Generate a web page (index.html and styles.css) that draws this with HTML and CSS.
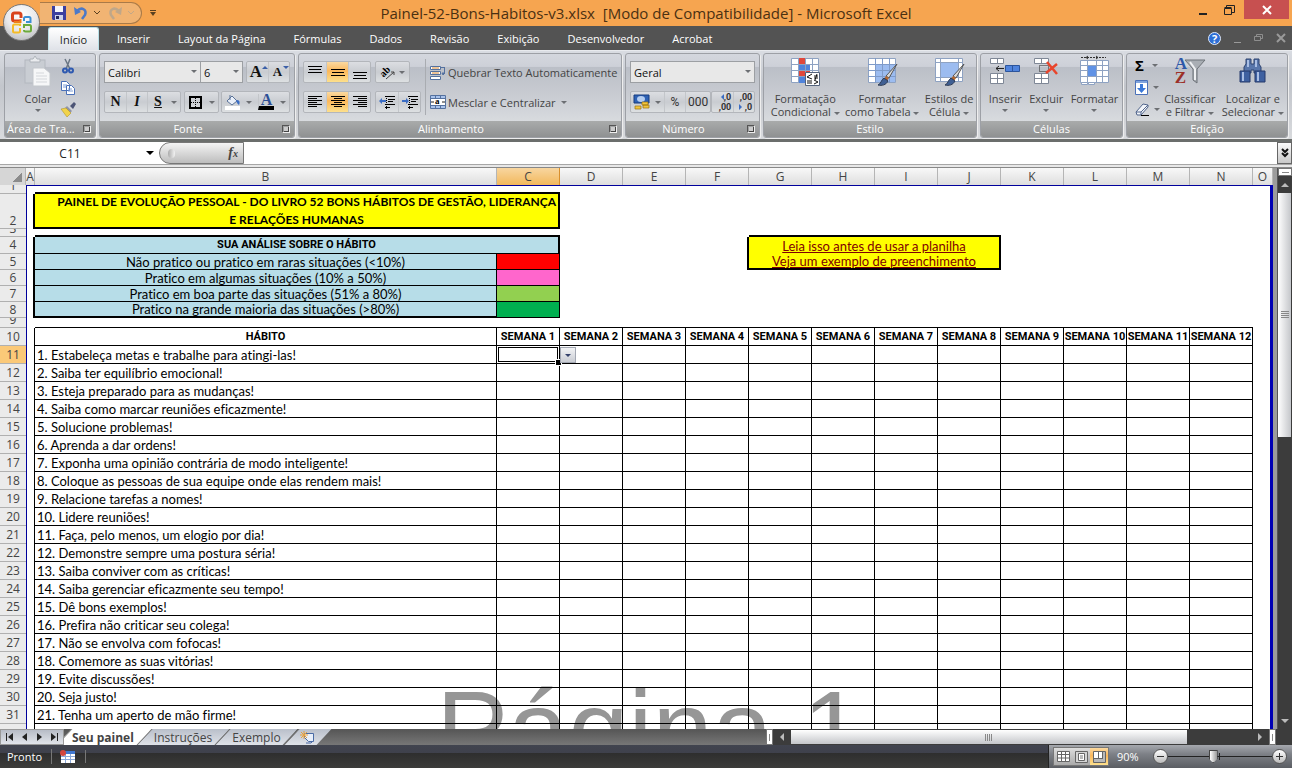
FILE: index.html
```
<!DOCTYPE html>
<html lang="pt-BR">
<head>
    <meta charset="UTF-8">
    <meta name="viewport" content="width=device-width, initial-scale=1.0">
    <link rel="stylesheet" href="styles.css">
    <title>Painel-52-Bons-Habitos-v3.xlsx - Microsoft Excel</title>
</head>
<body>
    <div class="window">
        <button class="office-button" aria-label="Botão Office">
            <svg width="24" height="24" viewBox="0 0 24 24" fill="none">
                <path d="M11 10H4.500Q2.500 10 2.500 8V4Q2.500 2 4.500 2H9Q11 2 11 4V7" stroke="#d9431c" stroke-width="3"/>
                <path d="M4 11h6.500V8" stroke="#ee7d1b" stroke-width="2"/>
                <path d="M14 10V7.500Q14 6 15.500 6H19Q20.500 6 20.500 7.500V11H16" stroke="#3b8fd4" stroke-width="2"/>
                <path d="M10 17V20Q10 21.500 8.500 21.500H4.500Q3 21.500 3 20V15Q3 13.500 4.500 13.500H10V15" stroke="#f4bb27" stroke-width="2"/>
                <path d="M14 17v-3h5.500Q21 14 21 15.500V19Q21 20.500 19.500 20.500H15.500Q14 20.500 14 19" stroke="#6cab3c" stroke-width="2"/>
            </svg>
        </button>

        <div class="titlebar">
            <div class="quick-access">
                <button class="plain" aria-label="Salvar">
                    <svg width="14" height="14" viewBox="0 0 14 14"><path d="M0 0h14v14H1L0 13z" fill="#3c3f9f"/><path d="M3 0h8v6H3z" fill="#f4f5fb"/><path d="M3 9h8v5H3z" fill="#cdd2ea"/><path d="M4 10h3v3H4z" fill="#23265f"/></svg>
                </button>
                <button class="plain" aria-label="Desfazer">
                    <svg width="14" height="14" viewBox="0 0 14 14"><path d="M3 5c5-5 10-1 8 4l-3 4" fill="none" stroke="#4c79c7" stroke-width="2.500"/><path d="M0 1l1 8 6-3z" fill="#4c79c7"/></svg>
                </button>
                <svg class="chevron" width="6" height="4" viewBox="0 0 6 4"><path d="M0 0l3 3 3-3" fill="none" stroke="#5a4020"/></svg>
                <button class="plain faded" aria-label="Refazer">
                    <svg width="14" height="14" viewBox="0 0 14 14"><path d="M11 5C6 0 1 4 3 9l3 4" fill="none" stroke="#b5a58f" stroke-width="2.500"/><path d="M14 1l-1 8-6-3z" fill="#b5a58f"/></svg>
                </button>
                <svg class="chevron faded" width="6" height="4" viewBox="0 0 6 4"><path d="M0 0l3 3 3-3" fill="none" stroke="#b5a58f"/></svg>
            </div>
            <button class="plain customize" aria-label="Personalizar">
                <svg width="6" height="6" viewBox="0 0 6 6"><path d="M0 0h6v1H0zM0 2h6L3 6z" fill="#5a4020"/></svg>
            </button>
            <h1 class="title">Painel-52-Bons-Habitos-v3.xlsx&nbsp; [Modo de Compatibilidade] - Microsoft Excel</h1>
            <div class="window-buttons">
                <button class="plain" aria-label="Minimizar"><svg width="8" height="10" viewBox="0 0 8 10"><path d="M0 8h8v2H0z" fill="#222"/></svg></button>
                <button class="plain" aria-label="Restaurar"><svg width="11" height="10" viewBox="0 0 11 10"><path d="M.5 3.500h7v6h-7zM.5 2.500h7" fill="none" stroke="#222"/><path d="M2.500 2V.5h8v7H8" fill="none" stroke="#222"/></svg></button>
                <button class="close" aria-label="Fechar"><svg width="8" height="8" viewBox="0 0 8 8"><path d="M0 0l8 8M8 0L0 8" stroke="#fff" stroke-width="2"/></svg></button>
            </div>
        </div>

        <div class="menu">
            <button class="tab active">Início</button>
            <button class="tab">Inserir</button>
            <button class="tab">Layout da Página</button>
            <button class="tab">Fórmulas</button>
            <button class="tab">Dados</button>
            <button class="tab">Revisão</button>
            <button class="tab">Exibição</button>
            <button class="tab">Desenvolvedor</button>
            <button class="tab">Acrobat</button>
            <div class="menu-right">
                <button class="help" aria-label="Ajuda">?</button>
                <button class="plain" aria-label="Minimizar pasta"><svg width="7" height="9" viewBox="0 0 7 9"><path d="M0 8h7v1H0z" fill="#9a9a9a"/></svg></button>
                <button class="plain" aria-label="Restaurar pasta"><svg width="10" height="8" viewBox="0 0 10 8"><path d="M.5 2.500h6v4h-6zM2.500 2.500v-2h6v4h-2" fill="none" stroke="#8e8e8e"/></svg></button>
                <button class="plain" aria-label="Fechar pasta"><svg width="8" height="8" viewBox="0 0 8 8"><path d="M0 0l8 8M8 0L0 8" stroke="#9a9a9a" stroke-width="2"/></svg></button>
            </div>
        </div>

        <div class="ribbon">
            <section class="group group-clipboard">
                <div class="group-body">
                    <button class="big">
                        <svg width="32" height="32" viewBox="0 0 32 32"><rect x="3" y="4" width="20" height="23" fill="#c9cdd3" stroke="#b3b8bf"/><path d="M8 6V3h3l2-3 2 3h3v3z" fill="#e9ebee" stroke="#aeb3ba"/><path d="M11 12h11l6 5v13H11z" fill="#f6f7f8" stroke="#c3c7cc"/><path d="M14 17h8M14 20h11M14 23h11M14 26h11" stroke="#d4d7db"/></svg>
                        <span>Colar</span><i class="arrow"></i>
                    </button>
                    <div class="stack clipboard-stack">
                        <button class="plain" aria-label="Recortar"><svg width="14" height="15" viewBox="0 0 14 15"><path d="M4 0l5 10M9 0L5 10" stroke="#6a7684" stroke-width="1.500"/><circle cx="4" cy="11.500" r="2" fill="none" stroke="#2f5ab0" stroke-width="2"/><circle cx="10" cy="11.500" r="2" fill="none" stroke="#2f5ab0" stroke-width="2"/></svg></button>
                        <button class="plain" aria-label="Copiar"><svg width="14" height="14" viewBox="0 0 14 14"><path d="M.5.5h5l3 3v6h-8zM5.500 4.500h5l3 3v6h-8z" fill="#fff" stroke="#4a70b8"/><path d="M2 4h4M2 6h3M7 8h4M7 10h5" stroke="#7d9cd4"/></svg></button>
                        <button class="plain" aria-label="Pincel"><svg width="15" height="15" viewBox="0 0 15 15"><path d="M9 4l4-4 2 2-3 5z" fill="#4d5576"/><path d="M6 4l5 5-2 2-5-5z" fill="#8f94a8"/><path d="M0 7l5-1 5 5-4 4z" fill="#f1d34a" stroke="#a98b1b" stroke-width=".5"/></svg></button>
                    </div>
                </div>
                <h2 class="group-title">Área de Tra...<i class="launcher"></i></h2>
            </section>

            <section class="group group-font">
                <div class="group-body rows">
                    <div class="row">
                        <div class="combo combo-font"><select aria-label="Fonte"><option>Calibri</option></select></div>
                        <div class="combo combo-size"><select aria-label="Tamanho"><option>6</option></select></div>
                        <div class="button-set font-resize">
                            <button class="serif grow" aria-label="Aumentar fonte">A<i class="mark up"></i></button>
                            <button class="serif shrink" aria-label="Diminuir fonte">A<i class="mark down"></i></button>
                        </div>
                    </div>
                    <div class="row spread">
                        <div class="button-set">
                            <button class="serif">N</button>
                            <button class="serif italic">I</button>
                            <button class="serif underline">S</button>
                            <button class="drop" aria-label="Sublinhado"><i class="arrow"></i></button>
                        </div>
                        <div class="button-set">
                            <button aria-label="Bordas"><svg width="13" height="13" viewBox="0 0 13 13"><path d="M1 1h11v11H1z" fill="none" stroke="#000" stroke-width="2"/><path d="M6.500 2v9M2 6.500h9" stroke="#000" stroke-dasharray="1 1"/></svg></button>
                            <button class="drop" aria-label="Mais bordas"><i class="arrow"></i></button>
                        </div>
                        <div class="button-set">
                            <button aria-label="Preenchimento"><svg width="16" height="15" viewBox="0 0 16 15"><path d="M2 6l5-5 5 5-5 4z" fill="#eaf0fa" stroke="#5b7399"/><path d="M12 5c3 0 3 3 2 5-2-1-2-3-3-4z" fill="#3b6dc4"/><path d="M5 0v5" stroke="#5b7399"/><path d="M0 11h15v4H0z" fill="#fff"/></svg></button>
                            <button class="drop" aria-label="Mais preenchimentos"><i class="arrow"></i></button>
                            <button class="serif font-color" aria-label="Cor da fonte">A</button>
                            <button class="drop" aria-label="Mais cores"><i class="arrow"></i></button>
                        </div>
                    </div>
                </div>
                <h2 class="group-title">Fonte<i class="launcher"></i></h2>
            </section>

            <section class="group group-align">
                <div class="group-body">
                    <div class="stack align-stack">
                        <div class="row">
                            <div class="button-set">
                                <button class="wide" aria-label="Alinhar em cima"><svg width="14" height="14" viewBox="0 0 14 14"><path d="M0 1.500h14M1 4.500h12M0 7.500h14" stroke="#000"/></svg></button>
                                <button class="wide on" aria-label="Alinhar no meio"><svg width="14" height="14" viewBox="0 0 14 14"><path d="M0 4.500h14M1 7.500h12M0 10.500h14" stroke="#000"/></svg></button>
                                <button class="wide" aria-label="Alinhar embaixo"><svg width="14" height="14" viewBox="0 0 14 14"><path d="M0 7.500h14M1 10.500h12M0 13.500h14" stroke="#000"/></svg></button>
                            </div>
                            <div class="button-set">
                                <button class="orientation" aria-label="Orientação"><svg width="17" height="15" viewBox="0 0 17 15"><text x="0" y="10" transform="rotate(-45 5 7)" class="svg-ab">ab</text><path d="M6 14l8-7M14 7h-3M14 7v3" stroke="#444" fill="none"/></svg><i class="arrow"></i></button>
                            </div>
                        </div>
                        <div class="row">
                            <div class="button-set">
                                <button class="wide" aria-label="Alinhar à esquerda"><svg width="14" height="12" viewBox="0 0 14 12"><path d="M0 .5h14M0 2.500h9M0 4.500h14M0 6.500h9M0 8.500h14M0 10.500h9" stroke="#000"/></svg></button>
                                <button class="wide on" aria-label="Centralizar"><svg width="14" height="12" viewBox="0 0 14 12"><path d="M0 .5h14M3 2.500h8M0 4.500h14M3 6.500h8M0 8.500h14M3 10.500h8" stroke="#000"/></svg></button>
                                <button class="wide" aria-label="Alinhar à direita"><svg width="14" height="12" viewBox="0 0 14 12"><path d="M0 .5h14M5 2.500h9M0 4.500h14M5 6.500h9M0 8.500h14M5 10.500h9" stroke="#000"/></svg></button>
                            </div>
                            <div class="button-set">
                                <button class="wide" aria-label="Diminuir recuo"><svg width="16" height="13" viewBox="0 0 16 13"><path d="M6 .5h10M9 3.500h7M9 5.500h5M6 8.500h10M6 11.500h5" stroke="#000"/><path d="M7.500 0v13" stroke="#000" stroke-dasharray="1 1"/><path d="M0 5l3-3v2h4v2H3v2z" fill="#3b6dc4"/></svg></button>
                                <button class="wide" aria-label="Aumentar recuo"><svg width="16" height="13" viewBox="0 0 16 13"><path d="M6 .5h10M9 3.500h7M9 5.500h5M6 8.500h10M6 11.500h5" stroke="#000"/><path d="M7.500 0v13" stroke="#000" stroke-dasharray="1 1"/><path d="M7 5L4 2v2H0v2h4v2z" fill="#3b6dc4"/></svg></button>
                            </div>
                        </div>
                    </div>
                    <div class="stack text-stack">
                        <button class="labelled"><svg width="16" height="15" viewBox="0 0 16 15"><path d="M.5 1.500h10v3H.5zM.5 6.500h10v3H.5zM.5 11.500h10v3H.5z" fill="#fff" stroke="#54719f"/><path d="M2 3h7M2 8h7" stroke="#d9862f"/><path d="M11 2.500h4M14.500 3v5M12 8h3l-2 2z" stroke="#54719f" fill="#54719f"/></svg><span>Quebrar Texto Automaticamente</span></button>
                        <button class="labelled"><svg width="16" height="14" viewBox="0 0 16 14"><path d="M.5.5h15v13H.5z" fill="#fff" stroke="#54719f"/><path d="M1 1h14v2H1zM1 11h14v2H1z" fill="#a9c3ec"/><path d="M0 3.500h16M0 10.500h16M5.500.5v3M10.500.5v3M5.500 10.500v3M10.500 10.500v3" stroke="#54719f"/><text x="5" y="9" class="svg-a">a</text><path d="M1 7h3M12 7h3" stroke="#222"/></svg><span>Mesclar e Centralizar</span><i class="arrow"></i></button>
                    </div>
                </div>
                <h2 class="group-title">Alinhamento<i class="launcher"></i></h2>
            </section>

            <section class="group group-number">
                <div class="group-body rows">
                    <div class="row">
                        <div class="combo combo-number"><select aria-label="Formato de número"><option>Geral</option></select></div>
                    </div>
                    <div class="row spread">
                        <div class="button-set">
                            <button aria-label="Formato de contabilização"><svg width="17" height="16" viewBox="0 0 17 16"><path d="M1 1h15v8H1z" fill="#2f62b5" stroke="#173d80"/><ellipse cx="8" cy="5" rx="4" ry="3" fill="#b4cdf1"/><path d="M9 8h6v3H9zM10 11h6v3h-6zM2 12h6v3H2z" fill="#f2c53d" stroke="#9b7413" stroke-width=".7"/></svg></button>
                            <button class="drop" aria-label="Mais moedas"><i class="arrow"></i></button>
                            <button class="percent">%</button>
                            <button class="thousand">000</button>
                        </div>
                        <div class="button-set">
                            <button class="decimal" aria-label="Aumentar casas"><i class="left-arrow"></i>,0<br>,00</button>
                            <button class="decimal" aria-label="Diminuir casas">,00<br><i class="right-arrow"></i>,0</button>
                        </div>
                    </div>
                </div>
                <h2 class="group-title">Número<i class="launcher"></i></h2>
            </section>

            <section class="group group-style">
                <div class="group-body">
                    <button class="big">
                        <svg width="32" height="32" viewBox="0 0 32 32"><path d="M2.500 2.500h27v24h-27z" fill="#fff" stroke="#8ea2c2"/><path d="M9 2h7v6H9zM9 14h12v6H9z" fill="#e0483c"/><path d="M9 8h12v6H9zM9 20h7v7H9z" fill="#4f83dc"/><path d="M2 8.500h28M2 14.500h28M2 20.500h28M9.500 2v25M16.500 2v25M23.500 2v25" stroke="#8ea2c2"/><path d="M16.500 16.500h14v13h-14z" fill="#fff" stroke="#53627c"/><path d="M23 18l-5 3 5 2M18 25h5M18 27h5M25 20h4M25 22h4M28 18l-2 6M25 24l4 2-4 2" fill="none" stroke="#111"/></svg>
                        <span>Formatação<br>Condicional <i class="arrow"></i></span>
                    </button>
                    <button class="big">
                        <svg width="32" height="32" viewBox="0 0 32 32"><path d="M2.500 2.500h27v24h-27z" fill="#fff" stroke="#8ea2c2"/><path d="M9 8h20v18H9z" fill="#9cbcf0"/><path d="M2 8.500h28M2 14.500h28M2 20.500h28M9.500 2v25M16.500 2v25M23.500 2v25" stroke="#7f9bc9"/><path d="M31 8L20 20l3 2z" fill="#d9d9d9" stroke="#555"/><path d="M20 20l3 2-2 3-3-2z" fill="#b5672f"/><path d="M18 22l4 3c-2 4-6 5-10 4 3-1 3-5 6-7z" fill="#3f5f93" stroke="#2d3b55"/></svg>
                        <span>Formatar<br>como Tabela <i class="arrow"></i></span>
                    </button>
                    <button class="big">
                        <svg width="32" height="32" viewBox="0 0 32 32"><path d="M2.500 2.500h27v23h-27z" fill="#fff" stroke="#8ea2c2"/><path d="M7.500 6.500h18v15h-18z" fill="#9cbcf0" stroke="#6f90c8"/><path d="M2 6.500h27M2 21.500h27M7.500 2v24M25.500 2v24" stroke="#8ea2c2"/><path d="M31 8L20 20l3 2z" fill="#d9d9d9" stroke="#555"/><path d="M20 20l3 2-2 3-3-2z" fill="#b5672f"/><path d="M18 22l4 3c-2 4-6 5-10 4 3-1 3-5 6-7z" fill="#3f5f93" stroke="#2d3b55"/></svg>
                        <span>Estilos de<br>Célula <i class="arrow"></i></span>
                    </button>
                </div>
                <h2 class="group-title">Estilo</h2>
            </section>

            <section class="group group-cells">
                <div class="group-body">
                    <button class="big">
                        <svg width="32" height="32" viewBox="0 0 32 32"><path d="M1.500 2.500h13v5h-13zM1.500 17.500h13v10h-13zM1.500 22.500h13M8.500 2v6M8.500 17v11" fill="#fff" stroke="#7e8796"/><path d="M16.500 9.500h14v6h-14z" fill="#4f83dc" stroke="#2c559c"/><path d="M23.500 9v7" stroke="#2c559c"/><path d="M7 12.500h8M10 10l-3 2.500 3 2.500" stroke="#222" fill="none"/></svg>
                        <span>Inserir</span><i class="arrow"></i>
                    </button>
                    <button class="big">
                        <svg width="32" height="32" viewBox="0 0 32 32"><path d="M4.500 2.500h14v5h-14zM4.500 17.500h14v10h-14zM4.500 22.500h14M11.500 2v6M11.500 17v11" fill="#fff" stroke="#7e8796"/><path d="M9.500 9.500h9v6h-9z" fill="none" stroke="#222" stroke-dasharray="1 1"/><path d="M17 6l10 12M27 8l-11 9" stroke="#e8452c" stroke-width="2.500"/></svg>
                        <span>Excluir</span><i class="arrow"></i>
                    </button>
                    <button class="big">
                        <svg width="32" height="32" viewBox="0 0 32 32"><path d="M2.500 4.500h28v22h-28z" fill="#fff" stroke="#8ea2c2"/><path d="M2 9.500h28M2 14.500h28M2 20.500h28M9.500 4v22M18.500 4v22M24.500 4v22" stroke="#8ea2c2"/><path d="M10 10h8v10h-8z" fill="#5f92e6"/><path d="M3.500 26.500h6v2h-6zM10.500 26.500h6v2h-6z" fill="#fff" stroke="#8ea2c2"/><path d="M3 1.500h25" stroke="#333" stroke-dasharray="2 1"/><path d="M10 0l-2 1.500L10 3M18 0l2 1.500L18 3" stroke="#333" fill="none"/></svg>
                        <span>Formatar</span><i class="arrow"></i>
                    </button>
                </div>
                <h2 class="group-title">Células</h2>
            </section>

            <section class="group group-edit">
                <div class="group-body">
                    <div class="stack edit-stack">
                        <button class="labelled sigma" aria-label="Soma">Σ<i class="arrow"></i></button>
                        <button class="labelled" aria-label="Preencher"><svg width="13" height="15" viewBox="0 0 13 15"><path d="M.5.5h12v14H.5z" fill="#fff" stroke="#4a70b8"/><path d="M1 1h11v2H1z" fill="#7fa3dd"/><path d="M5 4h3v4h3l-4.500 5L2 8h3z" fill="#3b78d8"/></svg><i class="arrow"></i></button>
                        <button class="labelled" aria-label="Limpar"><svg width="14" height="13" viewBox="0 0 14 13"><path d="M1 9l7-8 5 1v2l-7 8H2z" fill="#f2f5fa" stroke="#51658c"/><path d="M1 9h5l7-7M6 9v3" fill="none" stroke="#51658c"/><path d="M6 12.500h8" stroke="#000"/></svg><i class="arrow"></i></button>
                    </div>
                    <button class="big">
                        <span class="sort-icon"><b class="letter-a">A</b><b class="letter-z">Z</b><svg width="20" height="26" viewBox="0 0 20 26"><path d="M0 1h20l-8 9v14l-4-3V10z" fill="#a9aeb4" stroke="#6d7278"/><path d="M5 3l5 7v11" stroke="#eef0f2" stroke-width="2" fill="none"/></svg></span>
                        <span>Classificar<br>e Filtrar <i class="arrow"></i></span>
                    </button>
                    <button class="big">
                        <svg width="32" height="32" viewBox="0 0 32 32"><path d="M9 3h5v5h3V3h5v5l2 3v6h-7v-3h-3v3H7v-6l2-3z" fill="#5876ab" stroke="#2c4270"/><path d="M3 15h10v11H3zM18 15h10v11H18z" fill="#3e60a0" stroke="#24396a"/><path d="M6 16v9M21 16v9M11 4v7M19 4v7" stroke="#a9bee4" stroke-width="2"/></svg>
                        <span>Localizar e<br>Selecionar <i class="arrow"></i></span>
                    </button>
                </div>
                <h2 class="group-title">Edição</h2>
            </section>
        </div>

        <div class="formula-bar">
            <input class="name-box" type="text" value="C11" aria-label="Caixa de nome">
            <button class="plain name-drop" aria-label="Nomes"><i class="arrow black"></i></button>
            <div class="fx"><i class="knob"></i><button class="plain" aria-label="Inserir função"><em>f<sub>x</sub></em></button></div>
            <input class="formula" type="text" aria-label="Barra de fórmulas">
            <button class="expand" aria-label="Expandir"><svg width="8" height="10" viewBox="0 0 8 10"><path d="M1 1l3 3 3-3M1 5l3 3 3-3" fill="none" stroke="#111" stroke-width="2"/></svg></button>
        </div>

        <div class="workspace">
            <div class="sheet">
                <div class="watermark">Página 1</div>
                <table class="grid">
                    <colgroup>
                        <col class="col-heading"><col class="col-a"><col class="col-b">
                        <col class="col-week" span="12"><col class="col-o">
                    </colgroup>
                    <thead>
                        <tr id="letters"></tr>
                    </thead>
                    <tbody id="rows">
                        <tr class="h-1"><th><div>1</div></th><td class="a"></td><td colspan="2" class="thick-b"></td><td colspan="11"></td><td class="o"></td></tr>
                        <tr class="h-2"><th><div>2</div></th><td class="a thick-r"></td><td colspan="2" class="thick-b thick-r banner"><p>&nbsp;&nbsp;&nbsp;&nbsp;&nbsp;&nbsp;&nbsp;PAINEL DE EVOLUÇÃO PESSOAL - DO LIVRO 52 BONS HÁBITOS DE GESTÃO, LIDERANÇA<br>E RELAÇÕES HUMANAS</p></td><td colspan="11"></td><td class="o"></td></tr>
                        <tr class="h-3"><th><div>3</div></th><td class="a"></td><td colspan="2" class="thick-b"></td><td colspan="3"></td><td colspan="4" class="thick-b"></td><td colspan="4"></td><td class="o"></td></tr>
                        <tr class="h-4"><th><div>4</div></th><td class="a thick-r"></td><td colspan="2" class="scale strong thin-b thick-r">SUA ANÁLISE SOBRE O HÁBITO</td><td colspan="3" class="thick-r"></td><td colspan="4" class="link thick-r"><a href="#">Leia isso antes de usar a planilha</a></td><td colspan="4"></td><td class="o"></td></tr>
                        <tr class="h-5"><th><div>5</div></th><td class="a thick-r"></td><td class="scale thin-b thin-r">Não pratico ou pratico em raras situações (&lt;10%)</td><td class="thin-b thin-r red"></td><td colspan="3" class="thick-r"></td><td colspan="4" class="link thick-r thick-b"><a href="#">Veja um exemplo de preenchimento</a></td><td colspan="4"></td><td class="o"></td></tr>
                        <tr class="h-5"><th><div>6</div></th><td class="a thick-r"></td><td class="scale thin-b thin-r">Pratico em algumas situações (10% a 50%)</td><td class="thin-b thin-r pink"></td><td colspan="11"></td><td class="o"></td></tr>
                        <tr class="h-5"><th><div>7</div></th><td class="a thick-r"></td><td class="scale thin-b thin-r">Pratico em boa parte das situações (51% a 80%)</td><td class="thin-b thin-r lime"></td><td colspan="11"></td><td class="o"></td></tr>
                        <tr class="h-5"><th><div>8</div></th><td class="a thick-r"></td><td class="scale thick-b thin-r">Pratico na grande maioria das situações (&gt;80%)</td><td class="thin-b thin-r green"></td><td colspan="11"></td><td class="o"></td></tr>
                        <tr class="h-9"><th><div>9</div></th><td class="a"></td><td colspan="13" class="thin-b"></td><td class="o"></td></tr>
                    </tbody>
                </table>
            </div>
            <div class="v-scroll">
                <i class="split"></i>
                <button class="scroll-button" aria-label="Rolar para cima"><i class="tri up"></i></button>
                <div class="v-track"><i class="v-thumb"></i></div>
                <button class="scroll-button" aria-label="Rolar para baixo"><i class="tri down"></i></button>
            </div>
        </div>

        <div class="sheet-bar">
            <div class="sheet-nav">
                <button class="plain" aria-label="Primeira"><svg width="7" height="8" viewBox="0 0 7 8"><path d="M0 0h1v8H0zM7 0v8L2 4z" fill="#222"/></svg></button>
                <button class="plain" aria-label="Anterior"><svg width="5" height="8" viewBox="0 0 5 8"><path d="M5 0v8L0 4z" fill="#222"/></svg></button>
                <button class="plain" aria-label="Próxima"><svg width="5" height="8" viewBox="0 0 5 8"><path d="M0 0v8l5-4z" fill="#222"/></svg></button>
                <button class="plain" aria-label="Última"><svg width="7" height="8" viewBox="0 0 7 8"><path d="M6 0h1v8H6zM0 0v8l5-4z" fill="#222"/></svg></button>
            </div>
            <button class="sheet-tab current">Seu painel</button>
            <button class="sheet-tab">Instruções</button>
            <button class="sheet-tab">Exemplo</button>
            <button class="sheet-tab new" aria-label="Nova planilha"><svg width="15" height="13" viewBox="0 0 15 13"><path d="M4.500 2.500h9v8h-5l-4-4z" fill="#e8effa" stroke="#4a6ba5"/><path d="M6 12h5l3-3" fill="none" stroke="#4a6ba5"/><path d="M4 0v8M0 4h8M1 1l6 6M7 1L1 7" stroke="#e9a13b"/></svg></button>
            <div class="h-scroll">
                <i class="split"></i>
                <button class="scroll-button" aria-label="Rolar para a esquerda"><i class="tri left"></i></button>
                <div class="h-track"><i class="h-thumb"></i></div>
                <button class="scroll-button" aria-label="Rolar para a direita"><i class="tri right"></i></button>
                <i class="split"></i>
            </div>
        </div>

        <div class="status">
            <span class="ready">Pronto</span>
            <button class="plain macro" aria-label="Gravar macro"><svg width="15" height="13" viewBox="0 0 15 13"><path d="M1 1h14v12H1z" fill="#fff"/><path d="M5 1h10v3H5z" fill="#3f77d1"/><path d="M1 6.500h14M1 9.500h14M5.500 4v9M10.500 4v9" stroke="#8ba9da"/><circle cx="3" cy="3" r="3" fill="#d2453d"/></svg></button>
            <div class="status-right">
                <div class="views">
                    <button class="plain" aria-label="Normal"><svg width="13" height="11" viewBox="0 0 13 11"><path d="M.5.5h12v10H.5zM.5 3.500h12M.5 7h12M4.500.5v10M8.500.5v10" fill="#fff" stroke="#666"/></svg></button>
                    <button class="plain" aria-label="Layout da página"><svg width="13" height="12" viewBox="0 0 13 12"><path d="M.5.5h12v11H.5z" fill="#d5d5d5" stroke="#666"/><path d="M3.500 2.500h6v7h-6z" fill="#fff" stroke="#666"/><path d="M5 5h3M5 7h3" stroke="#777"/></svg></button>
                    <button class="plain on" aria-label="Quebra de página"><svg width="13" height="12" viewBox="0 0 13 12"><path d="M.5.5h12v11H.5z" fill="#b9b9b9" stroke="#666"/><path d="M1 1h4v6H1zM6 1h3v6H6z" fill="#fff"/><path d="M5.500 0v7M9.500 0v7M1 7.500h9" stroke="#666"/></svg></button>
                </div>
                <span class="percent-label">90%</span>
                <button class="zoom-button" aria-label="Menos zoom"><i class="minus"></i></button>
                <input class="zoom" type="range" min="0" max="100" value="43" aria-label="Zoom">
                <button class="zoom-button" aria-label="Mais zoom"><i class="minus"></i><i class="minus cross"></i></button>
            </div>
        </div>
    </div>
    <script src="script.js"></script>
</body>
</html>
```

FILE: styles.css
```
* {
    box-sizing: border-box;
}

body {
    margin: 0;
    font-family: "Open Sans", "Noto Sans", sans-serif;
    font-size: 11px;
    color: #333;
    background-color: #535353;
}

button {
    font: inherit;
    color: inherit;
    margin: 0;
    padding: 0;
    border: none;
    background: none;
    display: flex;
    align-items: center;
    justify-content: center;
    cursor: pointer;
}

svg {
    display: block;
    flex: none;
    overflow: visible;
}

.window {
    height: 100vh;
    display: flex;
    flex-direction: column;
    position: relative;
    overflow: hidden;
}

.window > div {
    flex: none;
}

/* title bar */

.office-button {
    position: absolute;
    left: 3px;
    top: 4px;
    z-index: 3;
    width: 37px;
    height: 37px;
    border-radius: 50%;
    border: 1px solid #777;
    background: radial-gradient(circle at 50% 30%, #fff 0, #e8e8ea 50%, #a9abb0 100%);
}

.titlebar {
    height: 26px;
    display: flex;
    align-items: center;
    position: relative;
    background-color: #f6a550;
}

.quick-access {
    height: 22px;
    margin-left: 40px;
    width: 102px;
    padding-left: 12px;
    display: flex;
    align-items: center;
    gap: 8px;
    border: 1px solid #a97a48;
    border-left: none;
    border-radius: 0 11px 11px 0;
    background-color: #f1b473;
}

.quick-access .chevron {
    margin-left: -2px;
}

.faded {
    opacity: 0.8;
}

.customize {
    margin-left: 8px;
}

.title {
    position: absolute;
    left: 160px;
    right: 160px;
    top: 0;
    margin: 0;
    line-height: 27px;
    font-size: 15px;
    font-weight: normal;
    text-align: center;
    color: #4a3012;
}

.window-buttons {
    margin-left: auto;
    align-self: flex-start;
    display: flex;
    align-items: center;
    gap: 17px;
}

.close {
    width: 45px;
    height: 19px;
    background-color: #c75050;
}

.window-buttons .close {
    margin-left: -8px;
    margin-right: 3px;
}

/* menu */

.menu {
    height: 24px;
    padding-left: 48px;
    display: flex;
    align-items: flex-end;
    background-color: #535353;
}

.tab {
    height: 24px;
    padding: 0 14px;
    color: #fff;
}

.tab.active {
    width: 51px;
    margin-right: 4px;
    height: 23px;
    color: #222;
    padding: 0;
    border: 1px solid #b9e0e8;
    border-bottom: none;
    border-radius: 3px 3px 0 0;
    background: linear-gradient(#fff, #dfe2e8);
}

.menu-right {
    margin-left: auto;
    align-self: center;
    padding-right: 7px;
    display: flex;
    align-items: center;
    gap: 13px;
}

.help {
    width: 13px;
    height: 13px;
    border-radius: 50%;
    border: 1px solid #dfe9fa;
    background-color: #2e6fd6;
    color: #fff;
    font-weight: bold;
    line-height: 11px;
}

/* ribbon */

.ribbon {
    height: 89px;
    padding: 2px 4px 1px;
    display: flex;
    gap: 3px;
    border-top: 1px solid #e8eaee;
    background: linear-gradient(#d9dce2, #c3c6cc 40%, #d8dadd);
}

.group {
    display: flex;
    flex-direction: column;
    overflow: hidden;
    border: 1px solid #9da0a6;
    border-radius: 3px;
    background: linear-gradient(#d4d7de 0, #cdd0d8 15%, #bbbfc7 16%, #c9ccd2 50%, #e1e4e6 100%);
    box-shadow: 1px 1px 0 #eee;
}

.group-clipboard {
    flex: 1 1 92px;
}

.group-font {
    flex: 1 1 196px;
}

.group-align {
    flex: 1 1 324px;
}

.group-number {
    flex: 1 1 135px;
}

.group-style {
    flex: 1 1 214px;
}

.group-cells {
    flex: 1 1 143px;
}

.group-edit {
    flex: 1 1 162px;
}

.group-body {
    flex: 1;
    display: flex;
    align-items: stretch;
    min-height: 0;
}

.group-style .group-body {
    padding-left: 4px;
}

.group-cells .group-body {
    padding-left: 4px;
}

.group-title {
    height: 16px;
    margin: 0;
    font-size: 11px;
    font-weight: normal;
    line-height: 15px;
    text-align: center;
    color: #fff;
    position: relative;
    background: linear-gradient(#a9abab, #8f9192);
}

.group-clipboard .group-title {
    text-align: left;
    padding-left: 2px;
}

.group-font .group-title,
.group-align .group-title,
.group-number .group-title {
    padding-right: 18px;
}

.launcher {
    position: absolute;
    right: 4px;
    top: 4px;
    width: 8px;
    height: 8px;
    border: 1px solid #555;
    border-right-color: #eee;
    border-bottom-color: #eee;
}

.launcher::after {
    content: "";
    position: absolute;
    right: 0;
    bottom: 0;
    width: 4px;
    height: 4px;
    border-right: 1px solid #444;
    border-bottom: 1px solid #444;
    background-color: #ccc;
}

.arrow {
    display: inline-block;
    flex: none;
    width: 0;
    height: 0;
    vertical-align: middle;
    border: 3px solid transparent;
    border-top-color: #6c6f73;
    border-bottom: none;
}

.arrow.black {
    border-width: 4px;
    border-bottom: none;
    border-top-color: #000;
}

.big {
    flex: 1 1 auto;
    flex-direction: column;
    justify-content: flex-start;
    padding-top: 2px;
    line-height: 13px;
    text-align: center;
    white-space: nowrap;
    color: #444;
}

.group-clipboard .big {
    padding-left: 10px;
}

.big svg {
    margin-bottom: 4px;
}

.big > .arrow {
    margin-top: 4px;
}

.stack {
    display: flex;
    flex-direction: column;
}

.clipboard-stack {
    width: 34px;
    gap: 7px;
    padding-top: 5px;
    align-items: flex-start;
}

.rows {
    flex-direction: column;
    gap: 8px;
    padding: 7px 4px 0;
}

.row {
    display: flex;
    height: 22px;
}

.spread {
    justify-content: space-between;
}

.combo {
    position: relative;
    display: flex;
}

.combo::after {
    content: "";
    position: absolute;
    right: 4px;
    top: 9px;
    border: 3px solid transparent;
    border-top-color: #6c6f73;
    border-bottom: none;
    pointer-events: none;
}

.combo select {
    width: 100%;
    padding: 0 3px;
    appearance: none;
    font: inherit;
    color: #111;
    border: 1px solid #9c9fa3;
    border-radius: 0;
    background-color: #e8e8e8;
}

.combo-font {
    width: 97px;
}

.combo-size {
    width: 43px;
    margin-left: -1px;
}

.combo-number {
    width: 128px;
}

.font-resize {
    margin-left: auto;
}

.button-set {
    display: flex;
    border: 1px solid #b3b6bb;
    border-radius: 2px;
    background: linear-gradient(#dcdee2, #c9ccd1 50%, #dde0e2);
}

.button-set button {
    min-width: 21px;
    position: relative;
}

.button-set button + button:not(.drop) {
    border-left: 1px solid #c3c6ca;
}

.button-set .drop {
    min-width: 12px;
}

.button-set .wide {
    min-width: 22px;
}

.button-set .on,
.views .on {
    background: linear-gradient(#fbd9a0, #fbb85c 45%, #fde08c);
}

.serif {
    font-family: "Liberation Serif", serif;
    font-size: 14px;
    font-weight: bold;
    color: #111;
}

.italic {
    font-style: italic;
}

.underline {
    text-decoration: underline;
}

.grow {
    font-size: 17px;
}

.shrink {
    font-size: 13px;
}

.grow,
.shrink {
    padding-right: 3px;
}

.mark {
    position: absolute;
    right: 0;
    top: 4px;
    border: 3px solid transparent;
}

.mark.up {
    border-top: none;
    border-bottom-color: #3b5fa8;
}

.mark.down {
    border-bottom: none;
    border-top-color: #3b5fa8;
}

.button-set .font-color {
    color: #2d4f96;
    font-size: 16px;
    line-height: 12px;
    align-self: center;
    height: 16px;
    border: none;
    border-bottom: 4px solid #000;
    min-width: 16px;
    margin: 0 3px;
}

.orientation {
    gap: 2px;
    padding: 0 4px;
}

.svg-ab {
    font: bold 10px "Liberation Serif", serif;
}

.svg-a {
    font: bold 9px "Liberation Serif", serif;
}

.align-stack {
    gap: 8px;
    padding: 7px 4px 0;
}

.align-stack .row {
    gap: 4px;
}

.text-stack {
    gap: 8px;
    margin-top: 5px;
    padding: 2px 0 0 4px;
    border-left: 1px solid #a9acb1;
    height: 56px;
    align-items: flex-start;
    white-space: nowrap;
}

.labelled {
    height: 22px;
    gap: 2px;
    color: #444;
}

.labelled .arrow {
    margin-left: 3px;
}

.percent,
.thousand {
    font-size: 12px;
}

.button-set .percent,
.button-set .thousand {
    border: none;
    padding: 0 2px;
}

.percent,
.thousand {
    font-family: Roboto, sans-serif;
}

.button-set .decimal {
    display: block;
    border: none;
    padding: 0 2px;
    font-family: Roboto, sans-serif;
    font-size: 9px;
    font-weight: bold;
    line-height: 10px;
    text-align: right;
}

.left-arrow,
.right-arrow {
    display: inline-block;
    border: 3px solid transparent;
}

.left-arrow {
    border-right-color: #3b6dc4;
}

.right-arrow {
    border-left-color: #3b6dc4;
}

.edit-stack {
    width: 34px;
    padding: 0 0 0 8px;
    align-items: flex-start;
}

.sigma {
    font-size: 15px;
    font-weight: bold;
    color: #000;
}

.sigma .arrow {
    margin-left: 6px;
}

.sort-icon {
    display: block;
    position: relative;
    width: 32px;
    height: 32px;
    margin-bottom: 4px;
    font-family: "Liberation Serif", serif;
    font-size: 17px;
}

.sort-icon b {
    position: absolute;
    left: 1px;
}

.letter-a {
    top: 1px;
    color: #2d57a8;
}

.letter-z {
    top: 15px;
    color: #9c3028;
}

.sort-icon svg {
    position: absolute;
    left: 11px;
    top: 3px;
}

/* formula bar */

.formula-bar {
    height: 28px;
    padding: 3px 0;
    display: flex;
    background: linear-gradient(#6b6e6c 0, #6b6e6c 3px, #fff 3px, #fff 25px, #666 25px, #e8e8e8 26px);
}

.formula-bar input {
    border: none;
    background: none;
    font: inherit;
    font-size: 12px;
    color: #222;
}

.name-box {
    width: 140px;
    padding: 0;
    text-align: center;
}

.name-drop {
    width: 19px;
}

.fx {
    width: 85px;
    display: flex;
    align-items: center;
    justify-content: space-between;
    padding: 0 5px 0 8px;
    border: 1px solid #777;
    border-radius: 11px 0 0 11px;
    background: linear-gradient(#f4f4f4, #bdbdbd);
}

.knob {
    width: 7px;
    height: 9px;
    border-radius: 50%;
    background: linear-gradient(90deg, #aaa, #f4f4f4);
}

.fx em {
    font-family: "Liberation Serif", serif;
    font-size: 14px;
    font-weight: bold;
    color: #444;
}

.fx sub {
    font-size: 10px;
    vertical-align: baseline;
}

.formula {
    flex: 1;
}

.expand {
    width: 15px;
    border: 1px solid #666;
    background: linear-gradient(#fafafa, #c8c8c8);
}

/* sheet */

.window .workspace {
    flex: 1;
    min-height: 0;
    display: flex;
    background-color: #9c9c9c;
    border-top: 1px solid #888;
}

.sheet {
    flex: 1;
    overflow: hidden;
    position: relative;
    margin-right: 4px;
    background-color: #fff;
}

.watermark {
    position: absolute;
    left: 26px;
    right: 0;
    top: 507px;
    text-align: center;
    font-family: "Liberation Sans", sans-serif;
    font-size: 108px;
    line-height: 108px;
    color: #969696;
}

.grid {
    position: relative;
    width: 100%;
    table-layout: fixed;
    border-collapse: separate;
    border-spacing: 0;
    font-family: Lato, sans-serif;
    font-size: 13px;
    font-variant-ligatures: none;
    line-height: 14px;
    color: #000;
}

.col-heading {
    width: 26px;
}

.col-a {
    width: 9px;
}

.col-week {
    width: 63px;
}

.col-o {
    width: 20px;
}

.grid td,
.grid th {
    padding: 0;
    white-space: nowrap;
}

.grid th {
    font-family: "Open Sans", sans-serif;
    font-size: 12px;
    font-weight: normal;
    color: #444;
}

.grid thead th {
    height: 17px;
    border-right: 1px solid #b5b5b5;
    background: linear-gradient(#f8f8f8, #dedede);
}

.grid thead .picked {
    border-right-color: #d98f2c;
    background: linear-gradient(#f8d6a0, #f2b85c);
}

.grid thead .corner {
    background: linear-gradient(135deg, transparent 50%, #8b8b8b 50%) no-repeat 13px 5px / 9px 9px, #d6d6d6;
}

.grid tbody th {
    border-bottom: 1px solid #b0b0b0;
    background-color: #ebebeb;
}

.grid tbody th.picked {
    background-color: #fbc978;
}

.grid tbody th div {
    display: flex;
    align-items: flex-end;
    justify-content: center;
    overflow: hidden;
}

.grid .a {
    border-left: 1px solid #00009c;
}

.grid .o {
    border-right: 3px solid #0000b4;
}

.h-1 td {
    height: 9px;
    border-top: 1px solid #00009c;
}

.h-1 div {
    height: 8px;
}

.h-2 td {
    height: 35px;
}

.h-2 div {
    height: 34px;
}

.h-3 td {
    height: 8px;
}

.h-3 div {
    height: 7px;
}

.h-4 td {
    height: 17px;
}

.h-5 td {
    height: 16px;
}

.h-9 td {
    height: 10px;
}

.h-9 div {
    height: 9px;
}

.h-10 td {
    height: 18px;
    border-bottom: 1px solid #000;
    border-right: 1px solid #000;
}

.h-10 .a {
    border-bottom: none;
}

.h-10 .o {
    border-bottom: none;
}

.grid .thick-b {
    border-bottom: 2px solid #000;
}

.grid .thick-r {
    border-right: 2px solid #000;
}

.grid .thin-b {
    border-bottom: 1px solid #000;
}

.grid .thin-r {
    border-right: 1px solid #000;
}

.banner {
    background-color: #ffff00;
}

.banner p {
    height: 32px;
    margin: 0;
    display: grid;
    align-content: center;
    font-size: 12px;
    line-height: 18px;
    font-weight: bold;
    text-align: center;
}

.scale {
    text-align: center;
    background-color: #b7dde8;
}

.strong,
.week {
    font-family: Roboto, sans-serif;
    font-size: 11px;
    font-weight: bold;
    text-align: center;
}

.red {
    background-color: #ff0000;
}

.pink {
    background-color: #ff66cc;
}

.lime {
    background-color: #92d050;
}

.green {
    background-color: #00b050;
}

.link {
    text-align: center;
    background-color: #ffff00;
}

.link a {
    color: #800000;
}

.grid .habit {
    padding-left: 2px;
}

.selected {
    position: relative;
}

.selected::before {
    content: "";
    position: absolute;
    inset: 1px;
    border: 1px solid #000;
}

.selected::after {
    content: "";
    position: absolute;
    right: -3px;
    bottom: -3px;
    width: 5px;
    height: 5px;
    border: 1px solid #fff;
    background-color: #000;
}

.cell-drop {
    position: absolute;
    left: 100%;
    top: 1px;
    margin-left: 1px;
    z-index: 1;
    width: 16px;
    height: 16px;
    border: 1px solid #a3a8b3;
    background: linear-gradient(#f2f3f5, #c9ccd3);
}

.cell-drop .arrow {
    border-top-color: #33406b;
}

/* scroll bars */

.split {
    flex: none;
    border: 1px solid #777;
    background: linear-gradient(#888, #888) no-repeat center / 7px 1px, #fff;
}

.scroll-button {
    flex: none;
    background-color: #3c3c3c;
}

.tri {
    border: 4px solid transparent;
}

.tri.up {
    border-top: none;
    border-bottom-color: #bbb;
}

.tri.down {
    border-bottom: none;
    border-top-color: #bbb;
}

.tri.left {
    border-left: none;
    border-right-color: #bbb;
}

.tri.right {
    border-right: none;
    border-left-color: #bbb;
}

.v-scroll {
    width: 15px;
    display: flex;
    flex-direction: column;
    border-left: 1px solid #555;
    background-color: #3c3c3c;
}

.v-scroll .split {
    height: 8px;
}

.v-scroll .scroll-button {
    height: 17px;
}

.v-track {
    flex: 1;
    padding-right: 1px;
}

.v-thumb {
    display: block;
    height: 47%;
    background: repeating-linear-gradient(#888 0 1px, transparent 1px 2px) no-repeat center / 8px 7px, linear-gradient(90deg, #fff, #c4c6ca);
}

.sheet-bar {
    height: 16px;
    display: flex;
    background: linear-gradient(#555, #777);
}

.sheet-nav {
    width: 64px;
    position: relative;
    z-index: 2;
    display: flex;
    align-items: center;
    justify-content: space-around;
    border: 1px solid #999;
    background: linear-gradient(#b7bcc6, #e1e4ea);
}

.sheet-tab {
    position: relative;
    z-index: 0;
    padding: 0 10px;
    font-size: 12px;
    line-height: 15px;
    color: #444;
}

.sheet-tab::before {
    content: "";
    position: absolute;
    inset: 0;
    z-index: -1;
    transform: skewX(-43deg);
    border-left: 1px solid #777;
    background: linear-gradient(#b9bfca, #dfe2e8);
}

.sheet-tab.current {
    z-index: 1;
    padding-left: 8px;
    font-weight: bold;
}

.sheet-tab.current::before {
    background: #fff;
}

.sheet-tab.new {
    width: 33px;
}

.h-scroll {
    width: 526px;
    margin-left: auto;
    padding-right: 16px;
    display: flex;
    background-color: #3c3c3c;
}

.h-scroll .split {
    width: 7px;
    background: linear-gradient(#888, #888) no-repeat center / 1px 7px, #fff;
}

.h-scroll .scroll-button {
    width: 18px;
}

.h-track {
    flex: 1;
    padding: 1px 0;
}

.h-thumb {
    display: block;
    width: 86%;
    height: 14px;
    background: repeating-linear-gradient(90deg, #888 0 1px, transparent 1px 2px) no-repeat center / 7px 7px, linear-gradient(#fff, #c4c6ca);
}

/* status bar */

.status {
    height: 23px;
    display: flex;
    align-items: center;
    color: #fff;
    background: linear-gradient(#41444f 0, #3f414c 8px, #2e2e2e 8px, #3c3c3a 100%);
}

.ready {
    padding: 0 9px 0 7px;
    border-right: 1px solid #777;
}

.macro {
    padding: 0 10px 0 8px;
    border-right: 1px solid #777;
}

.status-right {
    margin-left: auto;
    align-self: stretch;
    width: 244px;
    padding: 0 5px 0 4px;
    display: flex;
    align-items: center;
    border-left: 1px solid #222;
    background: linear-gradient(#a5a8ae, #7d8086 40%, #5b5e63);
}

.views {
    display: flex;
    border: 1px solid #777;
    background: linear-gradient(#ddd, #aaa);
}

.views button {
    width: 18px;
    height: 17px;
}

.percent-label {
    margin: 0 14px 0 8px;
}

.zoom-button {
    position: relative;
    width: 15px;
    height: 15px;
    border: 1px solid #555;
    border-radius: 50%;
    background: linear-gradient(#fff, #bbb);
}

.minus {
    position: absolute;
    left: 3px;
    top: 6px;
    width: 7px;
    height: 1px;
    background-color: #333;
}

.cross {
    transform: rotate(90deg);
}

.zoom {
    flex: 1;
    min-width: 0;
    height: 16px;
    margin: 0;
    appearance: none;
    background: linear-gradient(#222, #222) no-repeat center / 1px 7px, linear-gradient(#222, #222) no-repeat center / 100% 1px;
}

.zoom::-webkit-slider-thumb {
    appearance: none;
    width: 9px;
    height: 13px;
    background: linear-gradient(90deg, #fff, #999);
    border: 1px solid #444;
    clip-path: polygon(0 0, 100% 0, 100% 65%, 50% 100%, 0 65%);
}
```

FILE: script.js
```
const habits = [
    'Estabeleça metas e trabalhe para atingi-las!',
    'Saiba ter equilíbrio emocional!',
    'Esteja preparado para as mudanças!',
    'Saiba como marcar reuniões eficazmente!',
    'Solucione problemas!',
    'Aprenda a dar ordens!',
    'Exponha uma opinião contrária de modo inteligente!',
    'Coloque as pessoas de sua equipe onde elas rendem mais!',
    'Relacione tarefas a nomes!',
    'Lidere reuniões!',
    'Faça, pelo menos, um elogio por dia!',
    'Demonstre sempre uma postura séria!',
    'Saiba conviver com as críticas!',
    'Saiba gerenciar eficazmente seu tempo!',
    'Dê bons exemplos!',
    'Prefira não criticar seu colega!',
    'Não se envolva com fofocas!',
    'Comemore as suas vitórias!',
    'Evite discussões!',
    'Seja justo!',
    'Tenha um aperto de mão firme!'
];
const weeks = 12;

const letters = document.getElementById('letters');
const rows = document.getElementById('rows');

letters.innerHTML = '<th class="corner"></th>' + 'ABCDEFGHIJKLMNO'.split('').map(letter =>
    `<th class="${letter === 'C' ? 'picked' : ''}">${letter}</th>`
).join('');

function addRow(number, label, labelClass, cells, picked) {
    const row = document.createElement('tr');
    row.className = 'h-10';
    row.innerHTML = `<th class="${picked ? 'picked' : ''}"><div>${number}</div></th><td class="a"></td>`
        + `<td class="${labelClass}">${label}</td>${cells}<td class="o"></td>`;
    rows.appendChild(row);
}

// Header row of the weeks
let header = '';
for (let week = 1; week <= weeks; week++) {
    header += `<td class="week">SEMANA ${week}</td>`;
}
addRow(10, 'HÁBITO', 'week', header, false);

const empty = '<td></td>'.repeat(weeks);
const dropCell = '<td class="selected"><button class="cell-drop" aria-label="Escolher"><i class="arrow"></i></button></td>'
    + '<td></td>'.repeat(weeks - 1);

habits.forEach((habit, i) => {
    addRow(11 + i, `${i + 1}. ${habit}`, 'habit', i === 0 ? dropCell : empty, i === 0);
});

// Last row is cut by the bottom of the sheet
addRow('', '', 'habit', empty, false);
```
